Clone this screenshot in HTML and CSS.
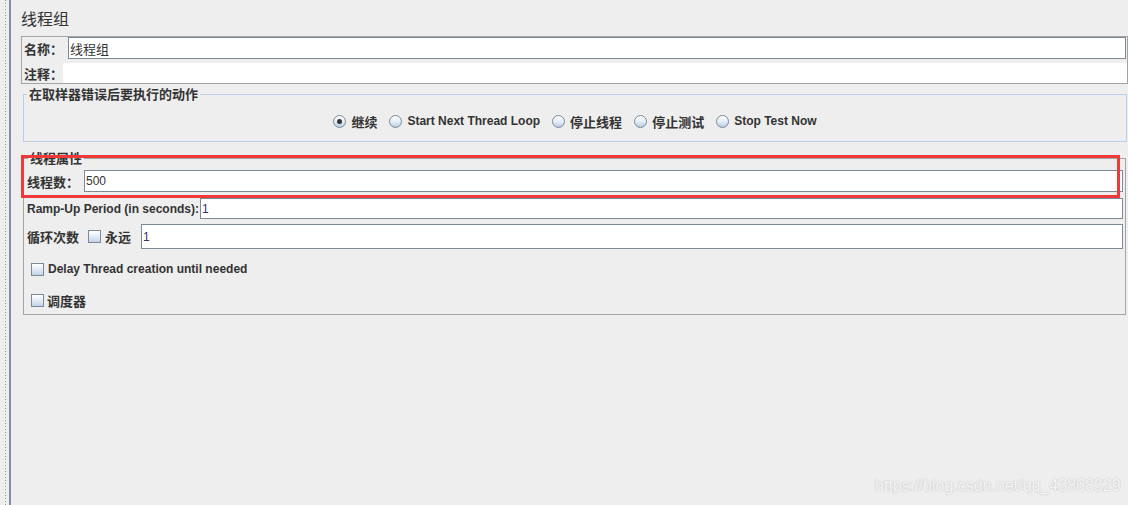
FILE: index.html
```html
<!DOCTYPE html>
<html lang="zh-CN">
<head>
<meta charset="utf-8">
<title>线程组</title>
<link rel="stylesheet" href="styles.css">
</head>
<body>
<div class="app">
  <div class="splitter"></div>
  <div class="divider"></div>
  <div class="main">
    <div class="title zh">线程组</div>

    <div class="name-panel">
      <div class="row name-row">
        <span class="label zh name-label">名称：</span>
        <div class="field"><span class="value zh-reg">线程组</span></div>
      </div>
      <div class="row comment-row">
        <span class="label zh comment-label">注释：</span>
        <div class="field plain"></div>
      </div>
    </div>

    <fieldset class="group action-group">
      <legend class="zh">在取样器错误后要执行的动作</legend>
      <div class="radios">
        <span class="radio-item"><span class="radio checked"></span><span class="zh">继续</span></span>
        <span class="radio-item"><span class="radio"></span><span class="en">Start Next Thread Loop</span></span>
        <span class="radio-item"><span class="radio"></span><span class="zh">停止线程</span></span>
        <span class="radio-item"><span class="radio"></span><span class="zh">停止测试</span></span>
        <span class="radio-item"><span class="radio"></span><span class="en">Stop Test Now</span></span>
      </div>
    </fieldset>

    <fieldset class="group props-group">
      <legend class="zh">线程属性</legend>
      <div class="row r1">
        <span class="label zh threads-label">线程数：</span>
        <div class="field"><span class="value en-reg">500</span></div>
      </div>
      <div class="row r2">
        <span class="label en ramp-label">Ramp-Up Period (in seconds):</span>
        <div class="field"><span class="value en-reg num">1</span></div>
      </div>
      <div class="row r3">
        <span class="label zh loop-label">循环次数</span>
        <span class="checkbox"></span>
        <span class="zh forever">永远</span>
        <div class="field"><span class="value en-reg num">1</span></div>
      </div>
      <div class="row r4">
        <span class="checkbox"></span>
        <span class="en cb-text">Delay Thread creation until needed</span>
      </div>
      <div class="row r5">
        <span class="checkbox"></span>
        <span class="zh cb-text2">调度器</span>
      </div>
    </fieldset>
  </div>
  <div class="highlight"></div>
  <div class="watermark">https://blog.csdn.net/qq_43868329</div>
</div>
</body>
</html>
```

FILE: styles.css
```css
html, body {
  margin: 0;
  padding: 0;
  background: #eeeeee;
}

body {
  font-family: "Liberation Sans", "Noto Sans CJK SC", Arial, sans-serif;
  font-size: 12px;
  color: #333333;
}

.app {
  position: relative;
  display: flex;
  width: 1128px;
  height: 505px;
  overflow: hidden;
}

.splitter {
  width: 9px;
  flex: none;
  background-image: linear-gradient(to bottom, #9a9a9a 1px, transparent 1px);
  background-size: 1px 3px;
  background-repeat: repeat-y;
  background-position: 5px 0;
}

.divider {
  width: 2px;
  flex: none;
  background: #8291a6;
}

.main {
  flex: 1;
  padding-left: 10px;
  min-width: 0;
}

.zh {
  font-family: "Noto Sans CJK SC", sans-serif;
  font-weight: bold;
  font-size: 13px;
}

.zh-reg {
  font-family: "Noto Sans CJK SC", sans-serif;
  font-size: 13px;
}

.en {
  font-family: "Liberation Sans", Arial, sans-serif;
  font-weight: bold;
  font-size: 12px;
}

.en-reg {
  font-family: "Liberation Sans", Arial, sans-serif;
  font-size: 12px;
}

.title {
  height: 36px;
  line-height: 36px;
  font-size: 16px;
  font-weight: normal;
}

.row {
  display: flex;
  align-items: center;
}

.label {
  flex: none;
  white-space: nowrap;
}

.field {
  flex: 1;
  height: 100%;
  box-sizing: border-box;
  background: #ffffff;
  border: 1px solid #7a8a99;
  display: flex;
  align-items: center;
  padding-left: 1px;
  min-width: 0;
}

.field.plain {
  border: none;
}

.value {
  line-height: 1;
}

.num {
  color: #3a2d72;
}

/* name panel */
.name-panel {
  border: 1px solid #a3a3a3;
  padding: 0 1px;
  height: 46px;
}

.name-row {
  height: 22px;
}

.name-label {
  width: 44px;
  padding-left: 1px;
}

.comment-row {
  height: 20px;
  margin-top: 4px;
  margin-right: -1px;
}

.comment-label {
  width: 39px;
  padding-left: 1px;
}

/* fieldsets */
.group {
  margin: 0;
  padding: 0;
  min-width: 0;
}

.group legend {
  padding: 0 2px;
  height: 14px;
  line-height: 14px;
}

.action-group {
  margin: 3px 1px 0 2px;
  border: 1px solid #b8cfe5;
}

.action-group legend {
  margin-left: 3px;
}

.radios {
  display: flex;
  justify-content: center;
  align-items: center;
  height: 20px;
  margin: 10px 0;
}

.radio-item {
  display: flex;
  align-items: center;
  margin: 0 6px;
  white-space: nowrap;
}

.radio {
  width: 13px;
  height: 13px;
  box-sizing: border-box;
  border-radius: 50%;
  border: 1px solid #7a8a99;
  background: linear-gradient(to bottom, #ffffff 0%, #e6eef7 50%, #b8cce3 100%);
  margin-right: 5px;
  position: relative;
  flex: none;
}

.radio.checked::after {
  content: "";
  position: absolute;
  left: 3px;
  top: 3px;
  width: 5px;
  height: 5px;
  border-radius: 50%;
  background: #333333;
}

.checkbox {
  width: 13px;
  height: 13px;
  box-sizing: border-box;
  border: 1px solid #7a8a99;
  background: linear-gradient(to bottom, #ffffff 0%, #e3ebf5 50%, #c2d3e8 100%);
  flex: none;
}

.props-group {
  margin: 9px 2px 0 2px;
  border: 1px solid #a3a3a3;
  padding: 0 2px 2px 3px;
}

.props-group legend {
  margin-left: 1px;
}

.r1 {
  height: 22px;
  margin-top: 5px;
}

.threads-label {
  width: 57px;
}

.r2 {
  height: 21px;
  margin-top: 6px;
}

.ramp-label {
  width: 173px;
}

.r3 {
  height: 25px;
  margin-top: 5px;
}

.loop-label {
  width: 61px;
}

.forever {
  width: 40px;
  padding-left: 4px;
  box-sizing: border-box;
}

.r4 {
  height: 24px;
  margin-top: 8px;
  padding-left: 4px;
}

.r5 {
  height: 24px;
  margin-top: 7px;
  padding-left: 4px;
}

.cb-text {
  margin-left: 4px;
}

.cb-text2 {
  margin-left: 3px;
}

.highlight {
  position: absolute;
  left: 21px;
  top: 155px;
  width: 1099px;
  height: 43px;
  box-sizing: border-box;
  border: 3px solid #f03a3a;
  pointer-events: none;
}

.watermark {
  position: absolute;
  left: 875px;
  top: 477px;
  font-family: "Liberation Sans", Arial, sans-serif;
  font-size: 16px;
  color: #f6f6f6;
  text-shadow: 0 0 1px #bdbdbd, 0 0 2px #d0d0d0;
  white-space: nowrap;
}
```
